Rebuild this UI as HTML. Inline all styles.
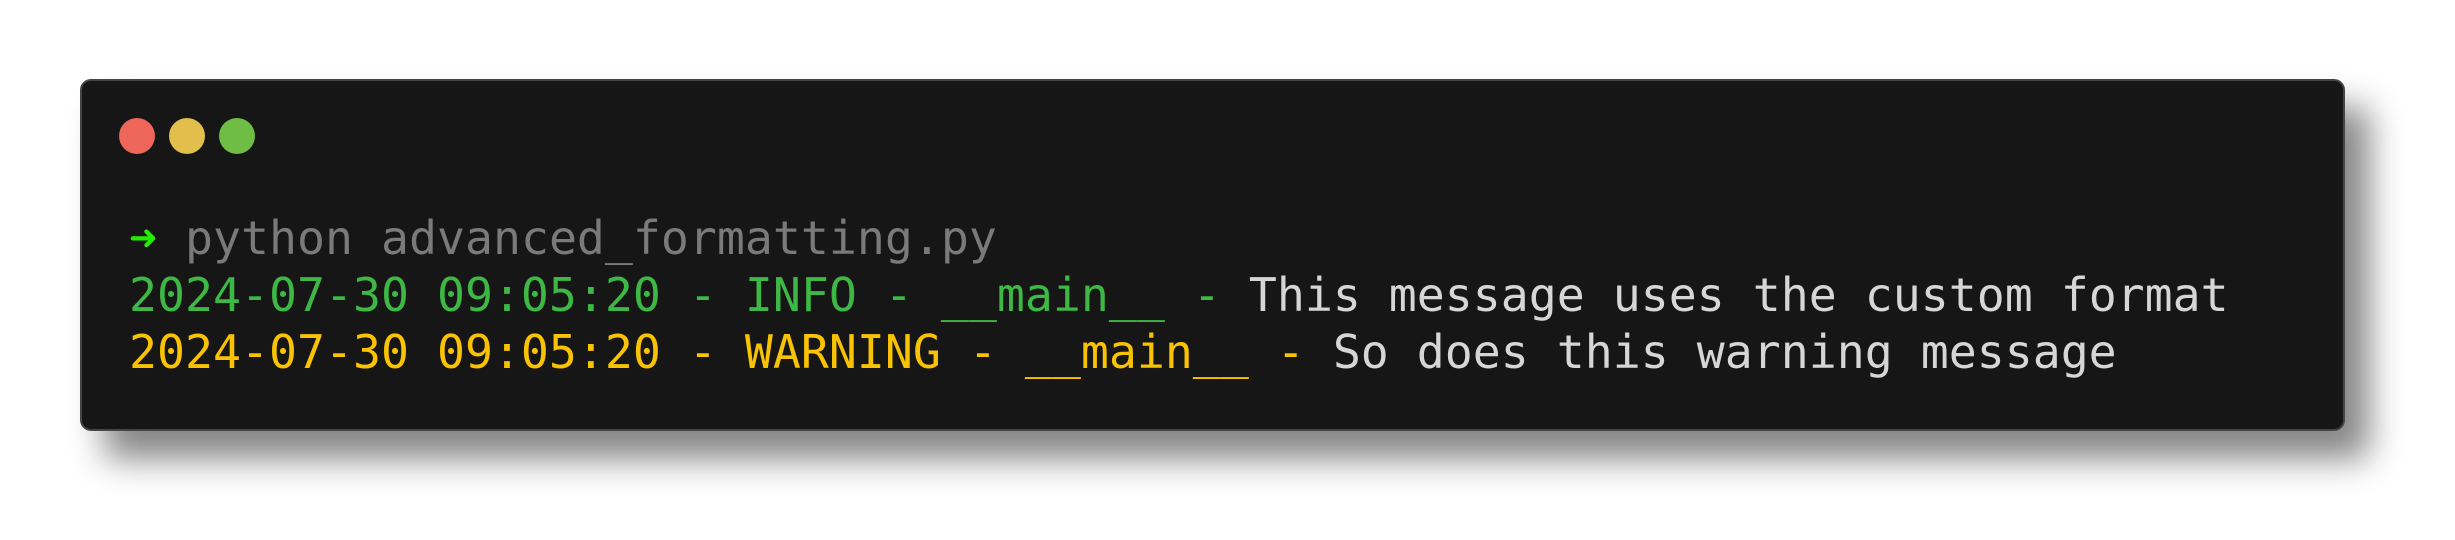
<!DOCTYPE html>
<html><head><style>
html,body{margin:0;padding:0;background:#fff;width:2455px;height:540px;overflow:hidden}
.win{position:absolute;left:80px;top:79px;width:2261px;height:348px;background:#161616;border:2px solid #454545;border-radius:11px;box-shadow:24px 28px 34px rgba(0,0,0,0.48)}
.dot{position:absolute;top:37px;width:36px;height:36px;border-radius:50%}
pre{position:absolute;left:47px;top:129px;margin:0;font-family:"DejaVu Sans Mono","Liberation Mono",monospace;font-size:46.5px;line-height:57px;color:#d6d6d6}
.g{color:#3db844}.y{color:#f9c301}.m{color:#7a7a7a}.a{color:#22ee00}
</style></head><body>
<div class="win">
<div class="dot" style="left:37px;background:#ee6559"></div>
<div class="dot" style="left:87px;background:#e2bf4d"></div>
<div class="dot" style="left:137px;background:#6fbd44"></div>
<pre><span class="a">➜</span> <span class="m">python advanced_formatting.py</span>
<span class="g">2024-07-30 09:05:20 - INFO - __main__ - </span>This message uses the custom format
<span class="y">2024-07-30 09:05:20 - WARNING - __main__ - </span>So does this warning message</pre>
</div>
</body></html>
